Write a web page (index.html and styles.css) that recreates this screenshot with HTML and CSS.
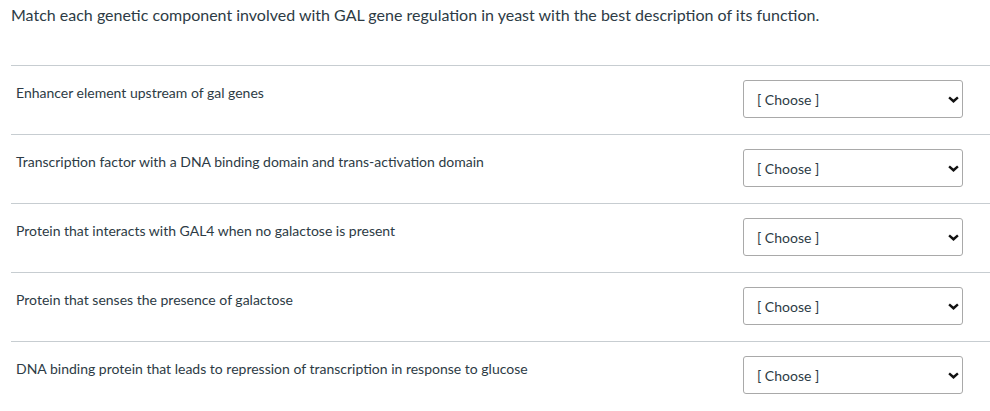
FILE: index.html
```html
<!DOCTYPE html>
<html lang="en">
<head>
  <meta charset="UTF-8" />
  <title>Matching question</title>
  <link rel="stylesheet" href="styles.css">
</head>
<body>

  <div class="question">
    <p class="question-text">Match each genetic component involved with GAL gene regulation in yeast with the best description of its function.</p>

    <div class="answers">
      <div class="answer-row">
        <span class="answer-label">Enhancer element upstream of gal genes</span>
        <div class="select-wrapper">
          <select><option>[ Choose ]</option></select>
          <svg class="chevron" viewBox="0 0 10 6"><path d="M1 1 L5 4.6 L9 1" /></svg>
        </div>
      </div>

      <div class="answer-row">
        <span class="answer-label">Transcription factor with a DNA binding domain and trans-activation domain</span>
        <div class="select-wrapper">
          <select><option>[ Choose ]</option></select>
          <svg class="chevron" viewBox="0 0 10 6"><path d="M1 1 L5 4.6 L9 1" /></svg>
        </div>
      </div>

      <div class="answer-row">
        <span class="answer-label">Protein that interacts with GAL4 when no galactose is present</span>
        <div class="select-wrapper">
          <select><option>[ Choose ]</option></select>
          <svg class="chevron" viewBox="0 0 10 6"><path d="M1 1 L5 4.6 L9 1" /></svg>
        </div>
      </div>

      <div class="answer-row">
        <span class="answer-label">Protein that senses the presence of galactose</span>
        <div class="select-wrapper">
          <select><option>[ Choose ]</option></select>
          <svg class="chevron" viewBox="0 0 10 6"><path d="M1 1 L5 4.6 L9 1" /></svg>
        </div>
      </div>

      <div class="answer-row">
        <span class="answer-label">DNA binding protein that leads to repression of transcription in response to glucose</span>
        <div class="select-wrapper">
          <select><option>[ Choose ]</option></select>
          <svg class="chevron" viewBox="0 0 10 6"><path d="M1 1 L5 4.6 L9 1" /></svg>
        </div>
      </div>
    </div>
  </div>

</body>
</html>
```

FILE: styles.css
```css
* {
  box-sizing: border-box;
  margin: 0;
  padding: 0;
  font-family: Lato, 'Open Sans', sans-serif;
}

body {
  background: #fff;
  color: #2d3b45;
  overflow: hidden;
}

.question {
  padding: 3px 0 0 11px;
}

.question-text {
  font-size: 16px;
  line-height: 24px;
  margin-bottom: 38px;
}

.answer-row {
  display: flex;
  justify-content: space-between;
  align-items: flex-start;
  border-top: 1px solid #c7cdd1;
  padding: 14px 27px 16px 5px;
}

.answer-label {
  font-size: 14px;
  line-height: 18px;
  margin-top: 4px;
}

.select-wrapper {
  position: relative;
  width: 220px;
}

.select-wrapper select {
  appearance: none;
  -webkit-appearance: none;
  width: 100%;
  height: 38px;
  padding: 0 24px 0 13px;
  border: 1px solid #a9a9a9;
  border-radius: 3px;
  background: #fff;
  color: #2d3b45;
  font-size: 14px;
}

.chevron {
  position: absolute;
  right: 4px;
  top: 16px;
  width: 11px;
  height: 7px;
  fill: none;
  stroke: #111;
  stroke-width: 2.2;
  pointer-events: none;
}
```
